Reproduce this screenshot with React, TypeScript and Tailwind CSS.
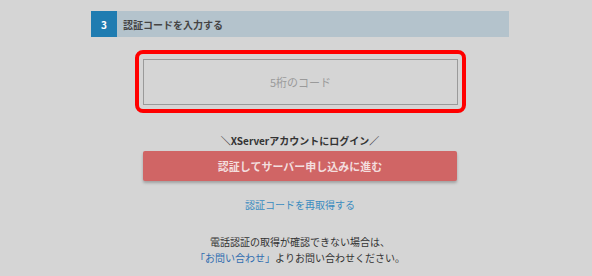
import React from "react";

const font = { fontFamily: '"Noto Sans CJK JP", "Noto Sans", sans-serif' };

const App = () => {
  return (
    <div className="w-[592px] h-[276px] bg-[#d5d5d5] overflow-hidden" style={font}>
      <div className="ml-[91px] w-[418px] pt-[11px] flex flex-col items-center">
        <div className="w-full h-[26px] flex items-center bg-[#b4c3cc]">
          <div className="w-[26px] h-[26px] bg-[#1f7cb1] text-white text-[10px] font-bold flex items-center justify-center">
            3
          </div>
          <span className="ml-[6px] text-[10px] font-bold text-[#444]">認証コードを入力する</span>
        </div>

        <div className="mt-[13px] ml-[1px] w-[331px] h-[63px] border-[4px] border-[#ff0000] rounded-[8px] flex items-center justify-center">
          <input
            type="text"
            placeholder="5桁のコード"
            className="w-[315px] h-[46px] border border-[#9a9a9a] bg-[#d5d5d5] text-center text-[11px] placeholder:text-[#9a9a9a] outline-none"
          />
        </div>

        <p className="mt-[21px] text-[10px] leading-[14px] font-bold text-[#333]">＼XServerアカウントにログイン／</p>

        <button className="mt-[3px] w-[314px] h-[30px] rounded-[2px] bg-[#d06565] text-[#f3dede] text-[11px] font-bold shadow-[0_2px_3px_rgba(0,0,0,0.25)]">
          認証してサーバー申し込みに進む
        </button>

        <a className="mt-[17px] text-[10px] leading-[14px] text-[#3b8cc0]">認証コードを再取得する</a>

        <div className="mt-[22px] text-center text-[10px] leading-[16px] text-[#333]">
          <p>電話認証の取得が確認できない場合は、</p>
          <p>
            <span className="text-[#2f6db0]">「お問い合わせ」</span>よりお問い合わせください。
          </p>
        </div>
      </div>
    </div>
  );
};

export default App;
